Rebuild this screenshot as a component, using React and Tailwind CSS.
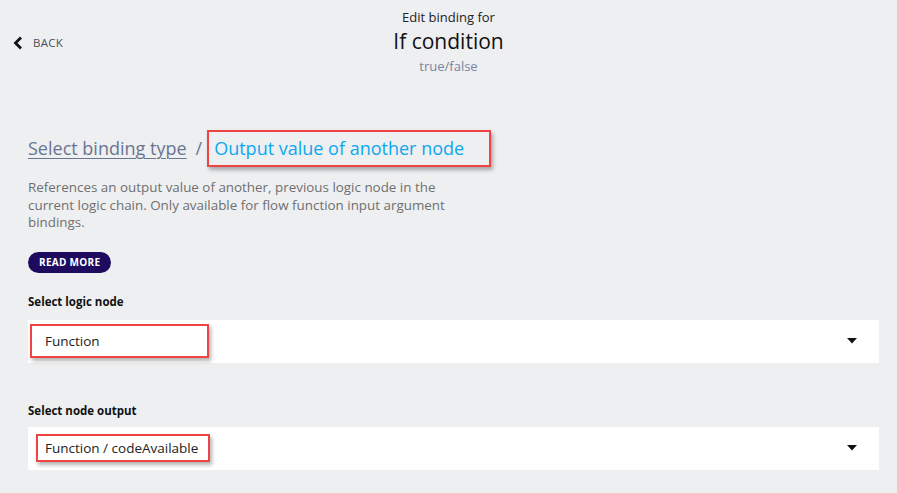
import React from "react";

const Caret = () => (
  <svg width="10" height="6" viewBox="0 0 10 6" className="shrink-0">
    <path d="M0 0 H10 L5 5.5 Z" fill="#111" />
  </svg>
);

export default function App() {
  return (
    <div
      className="w-[897px] h-[493px] overflow-hidden bg-[#eeeff1] text-black"
      style={{ fontFamily: "'Open Sans', Lato, sans-serif" }}
    >
      <div className="relative flex flex-col items-center pt-[8px]">
        <div className="absolute left-[13px] top-[34px] flex items-center gap-[10px]">
          <svg width="10" height="14" viewBox="0 0 10 14">
            <path d="M8 1.5 L2.5 7 L8 12.5" stroke="#111" strokeWidth="2.8" fill="none" />
          </svg>
          <span className="text-[11.5px] tracking-[0.3px] text-[#4b505c]">BACK</span>
        </div>
        <div className="text-[13px] leading-[19px] text-[#222]">Edit binding for</div>
        <div className="text-[21px] leading-[28px] text-[#111]">If condition</div>
        <div className="text-[13px] leading-[17px] mt-[3px] text-[#7884a0]">true/false</div>
      </div>

      <div className="px-[28px] pr-[18px] pt-[55px]">
        <div className="flex items-center">
          <span className="text-[18px] text-[#6a7592] underline underline-offset-[3px] decoration-1">
            Select binding type
          </span>
          <span className="text-[18px] text-[#6a7592] ml-[9px]">/</span>
          <span className="ml-[5px] border-2 border-[#ef4444] pl-[5px] w-[284px] h-[37px] flex items-center text-[18px] text-[#0aa9f0] shadow-[2px_3px_4px_rgba(0,0,0,0.3)]">
            Output value of another node
          </span>
        </div>

        <p className="mt-[12px] w-[445px] text-[13.4px] leading-[17.5px] text-[#6f6f6f]">
          References an output value of another, previous logic node in the current logic chain. Only available for flow function input argument bindings.
        </p>

        <button className="mt-[20px] h-[21px] px-[11px] rounded-full bg-[#1e0a5e] text-white text-[10px] font-bold tracking-[0.3px]">
          READ MORE
        </button>

        <div className="mt-[20px] h-[17px] leading-[17px] text-[11.5px] font-bold text-[#111]">Select logic node</div>
        <div className="mt-[10px] h-[43px] bg-white flex items-center justify-between pr-[22px]">
          <span className="ml-[2px] w-[179px] h-[34px] border-2 border-[#ef4444] pl-[13px] flex items-center text-[13.5px] text-[#222] shadow-[2px_3px_4px_rgba(0,0,0,0.3)]">
            Function
          </span>
          <Caret />
        </div>

        <div className="mt-[39px] h-[17px] leading-[17px] text-[11.5px] font-bold text-[#111]">Select node output</div>
        <div className="mt-[8px] h-[43px] bg-white flex items-center justify-between pr-[22px]">
          <span className="ml-[8px] w-[174px] h-[28px] border-2 border-[#ef4444] pl-[7px] flex items-center text-[13.5px] text-[#222] shadow-[2px_3px_4px_rgba(0,0,0,0.3)]">
            Function / codeAvailable
          </span>
          <Caret />
        </div>
      </div>
    </div>
  );
}
